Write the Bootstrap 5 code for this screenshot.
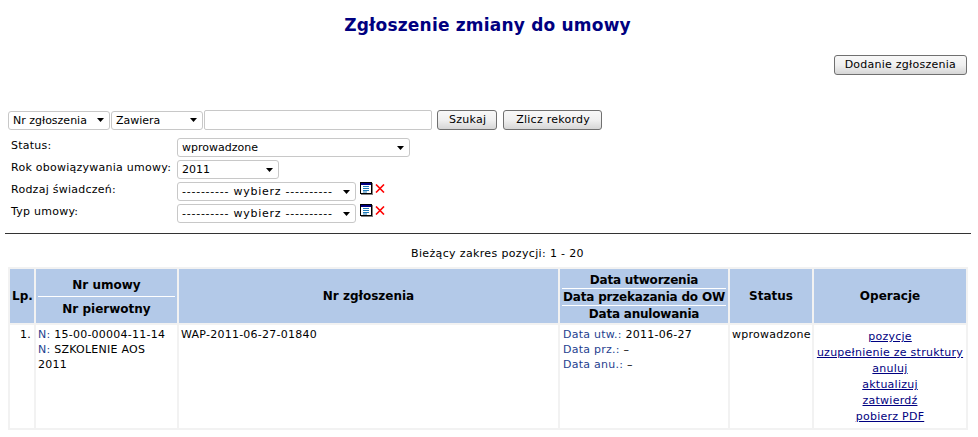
<!DOCTYPE html>
<html lang="pl">
<head>
    <meta charset="UTF-8">
    <title>Zgłoszenie zmiany do umowy</title>
    <link href="https://cdn.jsdelivr.net/npm/bootstrap@5.3.0/dist/css/bootstrap.min.css" rel="stylesheet">
    <style>
        body {
            background: #fff;
            color: #000;
            font-family: "DejaVu Sans", Verdana, sans-serif;
            font-size: 11px;
            letter-spacing: .25px;
            line-height: 15px;
        }
        .page-title {
            color: #000080;
            font-family: "DejaVu Sans", Verdana, sans-serif;
            font-size: 17px;
            font-weight: 700;
            letter-spacing: .2px;
            line-height: 20px;
            margin: 0;
            padding: 15px 3px 0 0;
            text-align: center;
        }
        .add-row {
            padding: 20px 11px 0 0;
            height: 75px;
        }
        .old-btn {
            background: linear-gradient(#f8f8f8, #f0f0f0 50%, #d6d6d6);
            border: 1px solid #707070;
            border-radius: 3px;
            color: #000;
            font-size: 11px;
            height: 20px;
            letter-spacing: .25px;
            line-height: 16px;
            padding: 0 10px;
        }
        .old-select.form-select {
            background-color: #fff;
            background-image: url("data:image/svg+xml,%3Csvg xmlns='http://www.w3.org/2000/svg' width='7' height='4'%3E%3Cpath d='M0 0h7L3.5 4z' fill='%23000'/%3E%3C/svg%3E");
            background-position: right 5px center;
            background-size: 7px 4px;
            border: 1px solid #c8c8c8;
            border-radius: 3px;
            color: #000;
            font-size: 11px;
            height: 19px;
            line-height: 15px;
            padding: 0 14px 0 4px;
        }
        .old-input {
            border: 1px solid #c8c8c8;
            border-radius: 2px;
            height: 20px;
            width: 228px;
            padding: 0 3px;
        }
        .search-row {
            display: flex;
            align-items: center;
            padding-left: 8px;
            height: 20px;
            gap: 1px;
        }
        .sel-field { width: 102px; }
        .sel-op { width: 92px; }
        .sel-status { width: 233px; }
        .sel-year { width: 102px; }
        .old-select.sel-pick { width: 179px; letter-spacing: .75px; }
        .filter-row {
            display: flex;
            align-items: flex-start;
            height: 22px;
            padding-left: 11px;
        }
        .filter-label {
            width: 166px;
            flex: none;
            white-space: nowrap;
        }
        .filters { padding-top: 8px; }
        .old-btn.btn-first { margin-left: 4px; padding: 0 10px 0 11px; }
        .old-btn.btn-next { margin-left: 5px; padding: 0 11px 0 12px; }
        .pick-icon { margin-left: 4px; margin-top: 0; }
        .cross-icon { margin-left: 2px; margin-top: 2px; }
        .page-rule {
            border: 0;
            border-top: 1px solid #333;
            margin: 7px 7px 0 5px;
            opacity: 1;
        }
        .range-info {
            padding: 12px 0 6px 17px;
            text-align: center;
            line-height: 15px;
            letter-spacing: .35px;
        }
        .wrap-table {
            padding: 0 8px;
        }
        .data-table {
            border-collapse: separate;
            border-spacing: 2px;
            background: #f2f2f2;
            table-layout: fixed;
            width: 960px;
        }
        .data-table th {
            background: #b3c9e8;
            font-size: 12px;
            font-weight: 700;
            letter-spacing: 0;
            line-height: 15px;
            padding: 0 2px;
            text-align: center;
            vertical-align: middle;
            height: 54px;
        }
        .data-table td {
            background: #fff;
            padding: 2px 2px 0;
            vertical-align: top;
            height: 103px;
        }
        .col-lp { width: 24px; }
        .col-umowa { width: 141px; }
        .col-zgl { width: 379px; }
        .col-data { width: 168px; }
        .col-status { width: 82px; }
        .th-split {
            border-top: 1px solid #fff;
        }
        .umowa-top { padding: 2px 0 3px; }
        .umowa-bottom { padding: 5px 0 0; }
        .date-stack { padding-top: 2px; }
        .date-line {
            letter-spacing: -.2px;
            line-height: 16px;
            white-space: nowrap;
        }
        .lab { color: #1f3f8f; }
        .cell-lp { text-align: right; padding-right: 3px !important; }
        .data-table td.cell-dates { padding-left: 3px; }
        .ops {
            padding-top: 2px;
            text-align: center;
            line-height: 16px;
        }
        .ops a {
            color: #000080;
            display: block;
            white-space: nowrap;
        }
    </style>
</head>
<body>
    <h1 class="page-title">Zgłoszenie zmiany do umowy</h1>

    <div class="add-row d-flex justify-content-end align-items-start">
        <button type="button" class="old-btn">Dodanie zgłoszenia</button>
    </div>

    <form>
        <div class="search-row">
            <select class="form-select old-select sel-field"><option>Nr zgłoszenia</option></select>
            <select class="form-select old-select sel-op"><option>Zawiera</option></select>
            <input type="text" class="old-input">
            <button type="button" class="old-btn btn-first">Szukaj</button>
            <button type="button" class="old-btn btn-next">Zlicz rekordy</button>
        </div>

        <div class="filters">
            <div class="filter-row">
                <span class="filter-label">Status:</span>
                <select class="form-select old-select sel-status"><option>wprowadzone</option></select>
            </div>
            <div class="filter-row">
                <span class="filter-label">Rok obowiązywania umowy:</span>
                <select class="form-select old-select sel-year"><option>2011</option></select>
            </div>
            <div class="filter-row">
                <span class="filter-label">Rodzaj świadczeń:</span>
                <select class="form-select old-select sel-pick"><option>---------- wybierz ----------</option></select>
                <svg class="pick-icon" width="13" height="13" viewBox="0 0 13 13"><rect x="1" y="1" width="12" height="12" fill="#808080"/><rect x=".5" y=".5" width="11" height="11" fill="#fff" stroke="#000"/><rect x="1" y="1" width="10" height="2" fill="#000080"/><path d="M3 4.5h6M3 6.5h6M3 8.5h6M3 10h4" stroke="#1c7ab8"/></svg>
                <svg class="cross-icon" width="10" height="9" viewBox="0 0 10 9"><path d="M1 .5l8 8M9 .5l-8 8" stroke="#f00" stroke-width="1.6"/></svg>
            </div>
            <div class="filter-row">
                <span class="filter-label">Typ umowy:</span>
                <select class="form-select old-select sel-pick"><option>---------- wybierz ----------</option></select>
                <svg class="pick-icon" width="13" height="13" viewBox="0 0 13 13"><rect x="1" y="1" width="12" height="12" fill="#808080"/><rect x=".5" y=".5" width="11" height="11" fill="#fff" stroke="#000"/><rect x="1" y="1" width="10" height="2" fill="#000080"/><path d="M3 4.5h6M3 6.5h6M3 8.5h6M3 10h4" stroke="#1c7ab8"/></svg>
                <svg class="cross-icon" width="10" height="9" viewBox="0 0 10 9"><path d="M1 .5l8 8M9 .5l-8 8" stroke="#f00" stroke-width="1.6"/></svg>
            </div>
        </div>
    </form>

    <hr class="page-rule">

    <div class="range-info">Bieżący zakres pozycji: 1 - 20</div>

    <div class="wrap-table">
        <table class="data-table">
            <colgroup>
                <col class="col-lp">
                <col class="col-umowa">
                <col class="col-zgl">
                <col class="col-data">
                <col class="col-status">
                <col>
            </colgroup>
            <thead>
                <tr>
                    <th>Lp.</th>
                    <th>
                        <div class="umowa-top">Nr umowy</div>
                        <div class="th-split umowa-bottom">Nr pierwotny</div>
                    </th>
                    <th>Nr zgłoszenia</th>
                    <th>
                        <div class="date-stack">
                            <div class="date-line">Data utworzenia</div>
                            <div class="date-line th-split">Data przekazania do OW</div>
                            <div class="date-line th-split">Data anulowania</div>
                        </div>
                    </th>
                    <th>Status</th>
                    <th>Operacje</th>
                </tr>
            </thead>
            <tbody>
                <tr>
                    <td class="cell-lp">1.</td>
                    <td><span class="lab">N:</span> 15-00-00004-11-14<br><span class="lab">N:</span> SZKOLENIE AOS 2011</td>
                    <td>WAP-2011-06-27-01840</td>
                    <td class="cell-dates"><span class="lab">Data utw.:</span> 2011-06-27<br><span class="lab">Data prz.:</span> –<br><span class="lab">Data anu.:</span> –</td>
                    <td>wprowadzone</td>
                    <td>
                        <div class="ops">
                            <a href="#">pozycje</a>
                            <a href="#">uzupełnienie ze struktury</a>
                            <a href="#">anuluj</a>
                            <a href="#">aktualizuj</a>
                            <a href="#">zatwierdź</a>
                            <a href="#">pobierz PDF</a>
                        </div>
                    </td>
                </tr>
            </tbody>
        </table>
    </div>

    <script src="https://cdn.jsdelivr.net/npm/bootstrap@5.3.0/dist/js/bootstrap.bundle.min.js"></script>
</body>
</html>
